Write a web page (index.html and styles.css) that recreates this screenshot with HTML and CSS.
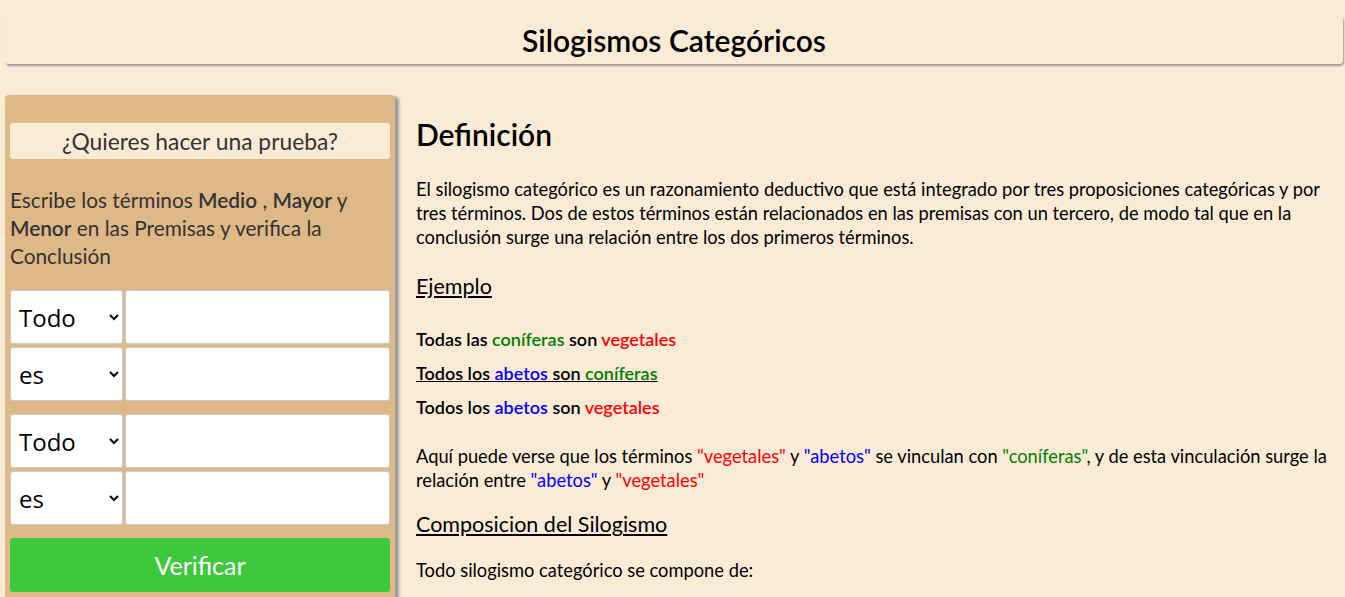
FILE: index.html
```html
<!DOCTYPE html>
<html lang="es">
<head>
<meta charset="utf-8">
<title>Silogismos Categóricos</title>
<link rel="stylesheet" href="styles.css">
</head>
<body>
<header class="topbar"><h1>Silogismos Categóricos</h1></header>
<div class="layout">
  <aside class="sidebar">
    <div class="quiz-title">¿Quieres hacer una prueba?</div>
    <p class="quiz-desc">Escribe los términos <b>Medio</b> , <b>Mayor</b> y <b>Menor</b> en las Premisas y verifica la Conclusión</p>
    <form class="quiz-form">
      <div class="premise">
        <div class="row">
          <select class="sel"><option>Todo</option></select>
          <input class="txt" type="text">
        </div>
        <div class="row">
          <select class="sel"><option>es</option></select>
          <input class="txt" type="text">
        </div>
      </div>
      <div class="premise">
        <div class="row">
          <select class="sel"><option>Todo</option></select>
          <input class="txt" type="text">
        </div>
        <div class="row">
          <select class="sel"><option>es</option></select>
          <input class="txt" type="text">
        </div>
      </div>
      <button type="button" class="verify">Verificar</button>
    </form>
  </aside>
  <main class="content">
    <h2 class="title">Definición</h2>
    <p class="text intro">El silogismo categórico es un razonamiento deductivo que está integrado por tres proposiciones categóricas y por tres términos. Dos de estos términos están relacionados en las premisas con un tercero, de modo tal que en la conclusión surge una relación entre los dos primeros términos.</p>
    <h3 class="subtitle">Ejemplo</h3>
    <div class="examples">
      <p class="ex">Todas las <span class="green">coníferas</span> son <span class="red">vegetales</span></p>
      <p class="ex underline">Todos los <span class="blue">abetos</span> son <span class="green">coníferas</span></p>
      <p class="ex">Todos los <span class="blue">abetos</span> son <span class="red">vegetales</span></p>
    </div>
    <p class="text explain">Aquí puede verse que los términos <span class="red">"vegetales"</span> y <span class="blue">"abetos"</span> se vinculan con <span class="green">"coníferas"</span>, y de esta vinculación surge la relación entre <span class="blue">"abetos"</span> y <span class="red">"vegetales"</span></p>
    <h3 class="subtitle tight">Composicion del Silogismo</h3>
    <p class="text">Todo silogismo categórico se compone de:</p>
  </main>
</div>
</body>
</html>
```
FILE: styles.css
```css
html, body {
  margin: 0;
  padding: 0;
}
body {
  background: #faebd7;
  font-family: Lato, "Noto Sans", sans-serif;
  color: #000;
  overflow: hidden;
}
.topbar {
  margin: 15px 2px 0 5px;
  height: 49px;
  border-radius: 4px;
  background: #faebd7;
  box-shadow: 1px 2px 2px #999;
  display: flex;
  align-items: center;
  justify-content: center;
}
.topbar h1 {
  margin: 0;
  font-size: 30px;
  font-weight: 600;
}
.layout {
  display: flex;
  align-items: flex-start;
  margin-top: 31px;
}
.sidebar {
  width: 380px;
  flex: 0 0 380px;
  margin-left: 5px;
  background: #deb887;
  border-radius: 4px;
  box-shadow: 4px 2px 3px #999;
  padding: 28px 5px 10px;
  color: #333;
  height: 500px;
}
.quiz-title {
  background: #faebd7;
  border-radius: 3px;
  height: 36px;
  line-height: 36px;
  text-align: center;
  font-size: 22.8px;
}
.quiz-desc {
  font-size: 20.8px;
  line-height: 28px;
  margin: 27px 0 20px;
}
.quiz-desc b {
  font-weight: 600;
}
.quiz-form {
  display: flex;
  flex-direction: column;
  gap: 13px;
}
.premise {
  display: flex;
  flex-direction: column;
  gap: 3px;
}
.row {
  display: flex;
  gap: 2px;
  height: 54px;
}
.sel {
  flex: 0 0 113px;
  width: 113px;
  height: 54px;
  box-sizing: border-box;
  border: 1px solid #ccc;
  border-radius: 3px;
  background: #fff;
  font-family: "Open Sans", "Noto Sans", sans-serif;
  font-size: 24px;
  padding: 0 4px;
  color: #000;
}
.txt {
  flex: 1 1 auto;
  min-width: 0;
  height: 54px;
  box-sizing: border-box;
  border: 1px solid #ccc;
  border-radius: 3px;
  background: #fff;
  font-size: 20px;
}
.verify {
  height: 54px;
  border: none;
  border-radius: 3px;
  background: #3ec83e;
  color: #fff;
  font-family: Lato, "Noto Sans", sans-serif;
  font-size: 25px;
}
.content {
  flex: 1;
  padding: 0 12px 0 21px;
}
.title {
  font-size: 30px;
  font-weight: 600;
  margin: 21px 0 25px;
}
.text {
  font-size: 18.3px;
  line-height: 24px;
  margin: 0 0 22px;
}
.text.intro {
  margin-bottom: 24px;
}
.text.explain {
  margin-bottom: 19px;
}
.subtitle {
  font-size: 21.5px;
  font-weight: 400;
  text-decoration: underline;
  margin: 0 0 22px;
}
.subtitle.tight {
  margin-bottom: 21px;
}
.examples {
  padding-top: 6px;
  margin-bottom: 25px;
}
.ex {
  font-size: 18px;
  font-weight: 600;
  margin: 0 0 10px;
  line-height: 24px;
}
.underline {
  text-decoration: underline;
}
.green { color: #008000; }
.red { color: #ff0000; }
.blue { color: #0000ff; }
```
